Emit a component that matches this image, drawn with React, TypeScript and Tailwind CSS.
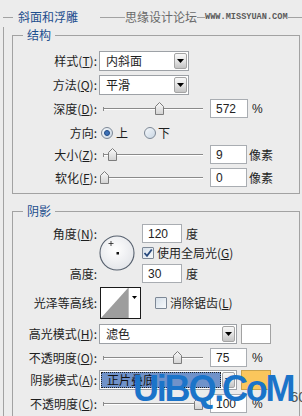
import React from "react";

function U({ c }: { c: string }) {
  return <span className="underline underline-offset-[1px]">{c}</span>;
}

function Label({ children }: { children: React.ReactNode }) {
  return (
    <div className="flex w-[84px] shrink-0 items-center justify-end whitespace-nowrap leading-none">
      {children}
    </div>
  );
}

function Arrow() {
  return (
    <svg width="7" height="4" viewBox="0 0 7 4">
      <polygon points="0,0 7,0 3.5,4" fill="#000" />
    </svg>
  );
}

function Select({ cls, children, hl = false }: { cls: string; children: React.ReactNode; hl?: boolean }) {
  return (
    <div className={`flex h-full items-stretch border border-[#9da1a6] bg-white ${cls}`}>
      {hl ? (
        <div className="m-[1px] flex flex-1 items-center border border-dotted border-[#222] bg-[#7092c9] pl-[5px] leading-none text-[#111]">
          {children}
        </div>
      ) : (
        <div className="flex flex-1 items-center pl-[6px] leading-none">{children}</div>
      )}
      <div className="my-[1px] mr-[1px] flex w-[13px] items-center justify-center rounded-[2px] border border-[#a4a4a4] bg-linear-to-b from-[#f8f8f8] via-[#e4e4e4] to-[#c4c4c4]">
        <Arrow />
      </div>
    </div>
  );
}

function Input({ cls, children }: { cls: string; children: React.ReactNode }) {
  return (
    <div
      className={`flex h-full items-center border border-[#a9adb2] bg-white pl-[5px] font-['Liberation_Sans',sans-serif] text-[12px] leading-none text-[#222] ${cls}`}
    >
      {children}
    </div>
  );
}

function Slider({ left }: { left: number }) {
  return (
    <div className="relative ml-[6px] h-full w-[100px]">
      <div className="absolute left-0 right-0 top-[9px] h-[2px] border-t border-b border-t-[#8a8a8a] border-b-white" />
      <div className="absolute left-0 top-[8px] h-[4px] w-px bg-[#8a8a8a]" />
      <svg className="absolute top-[3px]" style={{ left }} width="9" height="13" viewBox="0 0 9 13">
        <defs>
          <linearGradient id="thg" x1="0" y1="0" x2="0" y2="1">
            <stop offset="0" stopColor="#fafafa" />
            <stop offset="1" stopColor="#d2d2d2" />
          </linearGradient>
        </defs>
        <path d="M0.5 12.5 V4.5 L4.5 0.5 L8.5 4.5 V12.5 Z" fill="url(#thg)" stroke="#7c7c7c" />
      </svg>
    </div>
  );
}

function Radio({ on }: { on: boolean }) {
  return (
    <div className="flex h-[12px] w-[12px] shrink-0 items-center justify-center rounded-full border border-[#7d8896] bg-linear-to-br from-[#f5f8fb] to-[#c9d6e3]">
      {on && <div className="h-[6px] w-[6px] rounded-full border border-[#1f4a86] bg-[#3d72b8]" />}
    </div>
  );
}

function Check({ on }: { on: boolean }) {
  return (
    <div className="flex h-[12px] w-[12px] shrink-0 items-center justify-center rounded-[1px] border border-[#7d8896] bg-linear-to-br from-[#d6e0ea] to-[#f7f9fb]">
      {on && (
        <svg width="10" height="10" viewBox="0 0 10 10">
          <path d="M1.5 5 L4 7.8 L8.8 1.5" fill="none" stroke="#26487c" strokeWidth="1.8" />
        </svg>
      )}
    </div>
  );
}

export default function App() {
  return (
    <div className="relative h-[416px] w-[302px] overflow-hidden bg-[#ececec] font-['Noto_Sans_CJK_SC','Noto_Sans',sans-serif] text-[12px] text-[#1e1e1e]">
      <div className="pt-[9px]">
        <div className="flex h-[16px] items-center">
          <div className="ml-[3px] h-px w-[10px] bg-[#a2a2a2]" />
          <span className="ml-[5px] leading-none text-[#1c4e8e]">斜面和浮雕</span>
          <div className="ml-[22px] h-px w-[25px] bg-[#a2a2a2]" />
          <span className="leading-none text-[#6a6a6a]">思缘设计论坛</span>
          <div className="h-px w-[8px] bg-[#a2a2a2]" />
          <span className="font-['Liberation_Mono',monospace] text-[8.6px] font-bold leading-none text-[#5a5a5a]">
            WWW.MISSYUAN.COM
          </span>
          <div className="h-px flex-1 bg-[#a2a2a2]" />
        </div>

        <div className="-mt-[8px] ml-[3px] border-l border-[#a2a2a2] pb-[40px]">
          {/* 结构 */}
          <fieldset className="ml-[8px] mt-[10px] w-[288px] border border-[#a2a2a2] pb-[6px]">
            <legend className="ml-[10px] h-[16px] px-[4px] leading-[16px] text-[#1c4e8e]">结构</legend>
            <div className="mt-[8px] flex h-[20px] items-stretch">
              <Label>
                样式(<U c="T" />):
              </Label>
              <Select cls="ml-[2px] w-[90px]">内斜面</Select>
            </div>
            <div className="mt-[4px] flex h-[20px] items-stretch">
              <Label>
                方法(<U c="Q" />):
              </Label>
              <Select cls="ml-[2px] w-[90px]">平滑</Select>
            </div>
            <div className="mt-[4px] flex h-[19px] items-stretch">
              <Label>
                深度(<U c="D" />):
              </Label>
              <Slider left={52} />
              <Input cls="ml-[7px] w-[38px]">572</Input>
              <span className="ml-[4px] flex items-center font-['Liberation_Sans',sans-serif] leading-none">%</span>
            </div>
            <div className="mt-[7px] flex h-[16px] items-center">
              <Label>方向:</Label>
              <div className="ml-[4px]">
                <Radio on={true} />
              </div>
              <span className="ml-[3px] leading-none">上</span>
              <div className="ml-[16px]">
                <Radio on={false} />
              </div>
              <span className="ml-[2px] leading-none">下</span>
            </div>
            <div className="mt-[4px] flex h-[19px] items-stretch">
              <Label>
                大小(<U c="Z" />):
              </Label>
              <Slider left={5} />
              <Input cls="ml-[7px] w-[37px]">9</Input>
              <span className="ml-[2px] flex items-center leading-none">像素</span>
            </div>
            <div className="mt-[4px] flex h-[19px] items-stretch">
              <Label>
                软化(<U c="F" />):
              </Label>
              <Slider left={-3} />
              <Input cls="ml-[7px] w-[37px]">0</Input>
              <span className="ml-[2px] flex items-center leading-none">像素</span>
            </div>
          </fieldset>

          {/* 阴影 */}
          <fieldset className="ml-[8px] mt-[9px] w-[288px] border border-[#a2a2a2] pb-[10px]">
            <legend className="ml-[10px] h-[16px] px-[4px] leading-[16px] text-[#1c4e8e]">阴影</legend>
            <div className="mt-[5px] flex">
              <div className="flex h-[59px] w-[84px] shrink-0 flex-col justify-between">
                <div className="flex h-[19px] items-center justify-end leading-none">
                  角度(<U c="N" />):
                </div>
                <div className="flex h-[19px] items-center justify-end leading-none">高度:</div>
              </div>
              <svg className="ml-[2px] mt-[11px] shrink-0" width="36" height="36" viewBox="0 0 36 36">
                <defs>
                  <radialGradient id="cg" cx="0.45" cy="0.4" r="0.6">
                    <stop offset="0" stopColor="#ffffff" />
                    <stop offset="1" stopColor="#e4e6ea" />
                  </radialGradient>
                </defs>
                <circle cx="18" cy="18" r="17" fill="url(#cg)" stroke="#56606e" strokeWidth="1.1" />
                <path d="M12 6 V11 M9.5 8.5 H14.5" stroke="#222" strokeWidth="0.8" />
                <rect x="17.5" y="17" width="2.5" height="2.5" fill="#111" />
              </svg>
              <div className="ml-[7px] flex flex-col">
                <div className="flex h-[19px] items-stretch">
                  <Input cls="w-[40px]">120</Input>
                  <span className="ml-[4px] flex items-center leading-none">度</span>
                </div>
                <div className="mt-[2px] flex h-[16px] items-center">
                  <Check on={true} />
                  <span className="ml-[3px] leading-none">
                    使用全局光(<U c="G" />)
                  </span>
                </div>
                <div className="mt-[3px] flex h-[19px] items-stretch">
                  <Input cls="w-[40px]">30</Input>
                  <span className="ml-[4px] flex items-center leading-none">度</span>
                </div>
              </div>
            </div>

            <div className="mt-[4px] flex h-[32px] items-center">
              <Label>光泽等高线:</Label>
              <svg className="ml-[3px] shrink-0" width="41" height="32" viewBox="0 0 41 32">
                <rect x="0.5" y="0.5" width="40" height="31" fill="#fff" stroke="#1a1a1a" />
                <polygon points="1,31 28,1 28,31" fill="#9d9d9d" />
                <line x1="28.5" y1="1" x2="28.5" y2="31" stroke="#bdbdbd" />
                <polygon points="32,9 37,9 34.5,12" fill="#000" />
              </svg>
              <div className="ml-[14px]">
                <Check on={false} />
              </div>
              <span className="ml-[3px] leading-none">
                消除锯齿(<U c="L" />)
              </span>
            </div>

            <div className="mt-[5px] flex h-[20px] items-stretch">
              <Label>
                高光模式(<U c="H" />):
              </Label>
              <Select cls="ml-[2px] w-[138px]">滤色</Select>
              <div className="ml-[4px] w-[30px] border border-[#a2a2a2] bg-white" />
            </div>
            <div className="mt-[4px] flex h-[19px] items-stretch">
              <Label>
                不透明度(<U c="O" />):
              </Label>
              <Slider left={70} />
              <Input cls="ml-[7px] w-[37px]">75</Input>
              <span className="ml-[5px] flex items-center font-['Liberation_Sans',sans-serif] leading-none">%</span>
            </div>
            <div className="mt-[3px] flex h-[20px] items-stretch">
              <Label>
                阴影模式(<U c="A" />):
              </Label>
              <Select cls="ml-[2px] w-[138px]" hl={true}>
                正片叠底
              </Select>
              <div className="ml-[4px] w-[30px] border border-[#c9a24c] bg-[#fbc65c]" />
            </div>
            <div className="mt-[4px] flex h-[19px] items-stretch">
              <Label>
                不透明度(<U c="C" />):
              </Label>
              <Slider left={91} />
              <Input cls="ml-[7px] w-[37px]">100</Input>
              <span className="ml-[5px] flex items-center font-['Liberation_Sans',sans-serif] leading-none">%</span>
            </div>
          </fieldset>
        </div>
      </div>

      <span className="absolute left-[290px] top-[389px] font-['Liberation_Sans',sans-serif] text-[15px] leading-none text-[#555]">
        60
      </span>
      <span className="absolute left-[133px] top-[371px] font-['Liberation_Sans',sans-serif] text-[36px] font-bold leading-none tracking-[-2.2px] text-[#1b74c9]">
        UiBQ.CoM
      </span>
    </div>
  );
}
